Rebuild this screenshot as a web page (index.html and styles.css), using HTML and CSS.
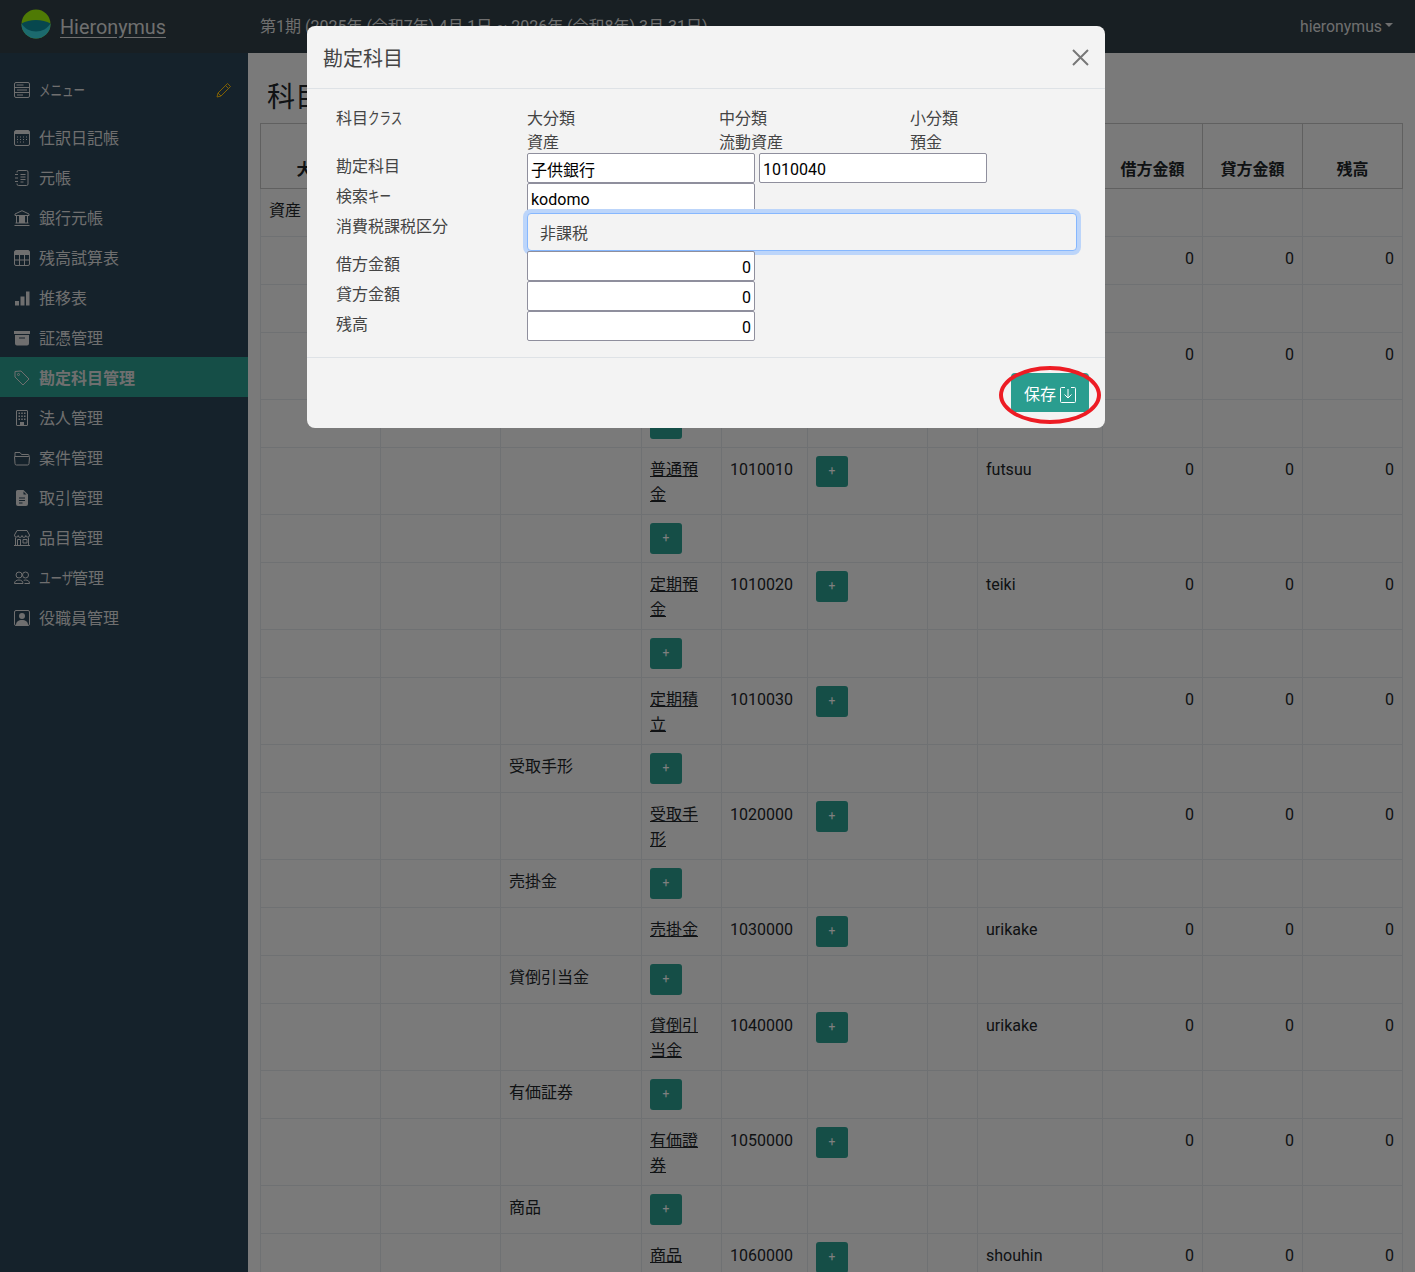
FILE: index.html
```html
<!DOCTYPE html>
<html lang="ja">
<head>
    <meta charset="UTF-8">
    <meta name="viewport" content="width=device-width, initial-scale=1.0">
    <title>Hieronymus</title>
    <link rel="stylesheet" href="styles.css">
</head>
<body>
    <header class="topbar">
        <a class="brand" href="#">
            <svg class="logo" viewBox="0 0 30 30">
                <circle cx="15" cy="15" r="14.5" fill="#9ef40a"/>
                <path d="M.5 15a14.5 14.5 0 0 0 29 0z" fill="#38d4dc"/>
                <path d="M.5 14.500c4-2 9-3.500 14.500-3.500s10.500 1.500 14.500 3.500c-3 5-8.500 8-14.500 8S3.500 19.500.5 14.500z" fill="#0f8f9c"/>
            </svg>
            <span>Hieronymus</span>
        </a>
        <span class="period">第1期 (2025年 (令和7年) 4月 1日 ~ 2026年 (令和8年) 3月 31日)</span>
        <span class="user">hieronymus<i class="caret"></i></span>
    </header>

    <div class="layout">
        <nav class="sidebar">
            <div class="menu-head">
                <svg class="icon" viewBox="0 0 16 16"><rect x=".5" y=".5" width="15" height="15" rx="1.500"/><path d="M.5 5.500h15M.5 10.500h15M2.500 3h7M3 8h10M3 13h6"/></svg>
                <span><b class="kana k4">メニュー</b></span>
                <svg class="icon pencil" viewBox="0 0 16 16"><path d="M11.500 1.500l3 3-9.500 9.500-4 1 1-4zM9.500 3.500l3 3M2 11l3 3"/></svg>
            </div>
            <a class="nav-item" href="#">
                <svg class="icon" viewBox="0 0 16 16"><rect x=".5" y=".5" width="15" height="15" rx="1.500"/><path class="solid" d="M1 1h14v3H1z"/><path d="M3 7h1m2 0h1m2 0h1m2 0h1M3 9.500h1m2 0h1m2 0h1m2 0h1M3 12h1m2 0h1m2 0h1"/></svg>
                <span>仕訳日記帳</span>
            </a>
            <a class="nav-item" href="#">
                <svg class="icon" viewBox="0 0 16 16"><path d="M3 2.500V2A1.500 1.500 0 0 1 4.500.5h8A1.500 1.500 0 0 1 14 2v12a1.500 1.500 0 0 1-1.500 1.500h-8A1.500 1.500 0 0 1 3 14v-.5M1 4.500h3M1 8h3M1 11.500h3M6.500 4.500h5M6.500 7h5M6.500 9.500h5M6.500 12h3"/></svg>
                <span>元帳</span>
            </a>
            <a class="nav-item" href="#">
                <svg class="icon" viewBox="0 0 16 16"><path d="M8 .7L1 4v1.500h14V4zM2.500 13V5.500M5.500 13V5.500M10.500 13V5.500M13.500 13V5.500M1.500 13h13M.5 15.500h15"/><path class="solid" d="M6 6h4v7H6z"/></svg>
                <span>銀行元帳</span>
            </a>
            <a class="nav-item" href="#">
                <svg class="icon" viewBox="0 0 16 16"><rect x=".5" y=".5" width="15" height="15" rx="1.500"/><path class="solid" d="M1 1h14v4H1z"/><path d="M.5 10h15M5.500 5v10.500M10.500 5v10.500"/></svg>
                <span>残高試算表</span>
            </a>
            <a class="nav-item" href="#">
                <svg class="icon" viewBox="0 0 16 16"><path class="solid" d="M1 11h4v4.500H1zM6.500 6.500h4v9h-4zM12 1.500h3.500v14H12z"/></svg>
                <span>推移表</span>
            </a>
            <a class="nav-item" href="#">
                <svg class="icon" viewBox="0 0 16 16"><path class="solid" d="M0 1h16v3H0zM1 5h14v8.500a2 2 0 0 1-2 2H3a2 2 0 0 1-2-2zm4 2.500v1h6v-1z"/></svg>
                <span>証憑管理</span>
            </a>
            <a class="nav-item active" href="#">
                <svg class="icon" viewBox="0 0 16 16"><path d="M1 1.500l6-.5 8 8-6 6-8-8z"/><circle cx="4.500" cy="4.500" r="1"/></svg>
                <span>勘定科目管理</span>
            </a>
            <a class="nav-item" href="#">
                <svg class="icon" viewBox="0 0 16 16"><rect x="2.500" y=".5" width="11" height="15" rx=".5"/><path class="solid" d="M4.500 2.500h1.500V4H4.500zM7.250 2.500h1.500V4h-1.500zM10 2.500h1.500V4H10zM4.500 5.500h1.500V7H4.500zM7.250 5.500h1.500V7h-1.500zM10 5.500h1.500V7H10zM4.500 8.500h1.500V10H4.500zM7.250 8.500h1.500V10h-1.500zM10 8.500h1.500V10H10zM6 12h4v3.500H6z"/></svg>
                <span>法人管理</span>
            </a>
            <a class="nav-item" href="#">
                <svg class="icon" viewBox="0 0 16 16"><path d="M1 6V2.500h5l1.500 2h6.500a1 1 0 0 1 1 1V7M.5 6.500h14a1 1 0 0 1 1 1l-.5 6a1.500 1.500 0 0 1-1.500 1.500h-11A1.500 1.500 0 0 1 1 13.500z"/></svg>
                <span>案件管理</span>
            </a>
            <a class="nav-item" href="#">
                <svg class="icon" viewBox="0 0 16 16"><path class="solid" d="M3.500 0H9.500l4.500 4.500V14a2 2 0 0 1-2 2H4a2 2 0 0 1-2-2V1.500A1.500 1.500 0 0 1 3.500 0zM5 7.500v1h6v-1zm0 2.500v1h6v-1zm0 2.500v1h3.500v-1zM9.500 1.500V4.500h3z"/></svg>
                <span>取引管理</span>
            </a>
            <a class="nav-item" href="#">
                <svg class="icon" viewBox="0 0 16 16"><path d="M3 .5h10l2.500 4.500a1.800 1.800 0 0 1-3.700.5 1.900 1.900 0 0 1-3.800 0 1.900 1.900 0 0 1-3.800 0A1.800 1.800 0 0 1 .5 5zM1.500 7.500v7.500M14.500 7.500v7.500M0 15.500h16M3.500 15V9.500h3V15M9 9.500h4v3.500H9z"/></svg>
                <span>品目管理</span>
            </a>
            <a class="nav-item" href="#">
                <svg class="icon" viewBox="0 0 16 16"><circle cx="5" cy="5" r="3"/><circle cx="11.500" cy="5" r="3"/><path d="M.5 13.500c0-2.500 2-3.500 4.500-3.500s4 1.500 4 3.500zM10.500 13.500h5c0-2.500-1.800-3.500-4-3.500-.7 0-1.300.1-1.800.3"/></svg>
                <span><b class="kana k3">ユーザ</b>管理</span>
            </a>
            <a class="nav-item" href="#">
                <svg class="icon" viewBox="0 0 16 16"><rect x=".5" y=".5" width="15" height="15" rx="1.500"/><circle class="solid" cx="8" cy="6" r="3"/><path class="solid" d="M2 15c0-3.500 2.500-5 6-5s6 1.500 6 5z"/></svg>
                <span>役職員管理</span>
            </a>
        </nav>

        <main class="content">
            <h1 class="page-title">科目一覧</h1>
            <table class="accounts">
                <colgroup>
                    <col class="c1"><col class="c2"><col class="c3"><col class="c4"><col class="c5"><col class="c6">
                    <col class="c7"><col class="c8"><col class="c9"><col class="c9"><col class="c9">
                </colgroup>
                <thead>
                    <tr><th>大分類</th><th></th><th></th><th></th><th></th><th></th><th></th><th></th><th>借方金額</th><th>貸方金額</th><th>残高</th></tr>
                </thead>
                <tbody>
                    <tr><td>資産</td><td></td><td></td><td></td><td></td><td></td><td></td><td></td><td></td><td></td><td></td></tr>
                    <tr><td></td><td></td><td></td><td></td><td></td><td></td><td></td><td></td><td class="num">0</td><td class="num">0</td><td class="num">0</td></tr>
                    <tr><td></td><td></td><td></td><td></td><td></td><td></td><td></td><td></td><td></td><td></td><td></td></tr>
                    <tr class="tall"><td></td><td></td><td></td><td></td><td></td><td></td><td></td><td></td><td class="num">0</td><td class="num">0</td><td class="num">0</td></tr>
                    <tr><td></td><td></td><td></td><td><button class="add">+</button></td><td></td><td></td><td></td><td></td><td></td><td></td><td></td></tr>
                    <tr><td></td><td></td><td></td><td><a href="#">普通預金</a></td><td>1010010</td><td><button class="add">+</button></td><td></td><td>futsuu</td><td class="num">0</td><td class="num">0</td><td class="num">0</td></tr>
                    <tr><td></td><td></td><td></td><td><button class="add">+</button></td><td></td><td></td><td></td><td></td><td></td><td></td><td></td></tr>
                    <tr><td></td><td></td><td></td><td><a href="#">定期預金</a></td><td>1010020</td><td><button class="add">+</button></td><td></td><td>teiki</td><td class="num">0</td><td class="num">0</td><td class="num">0</td></tr>
                    <tr><td></td><td></td><td></td><td><button class="add">+</button></td><td></td><td></td><td></td><td></td><td></td><td></td><td></td></tr>
                    <tr><td></td><td></td><td></td><td><a href="#">定期積立</a></td><td>1010030</td><td><button class="add">+</button></td><td></td><td></td><td class="num">0</td><td class="num">0</td><td class="num">0</td></tr>
                    <tr><td></td><td></td><td>受取手形</td><td><button class="add">+</button></td><td></td><td></td><td></td><td></td><td></td><td></td><td></td></tr>
                    <tr><td></td><td></td><td></td><td><a href="#">受取手形</a></td><td>1020000</td><td><button class="add">+</button></td><td></td><td></td><td class="num">0</td><td class="num">0</td><td class="num">0</td></tr>
                    <tr><td></td><td></td><td>売掛金</td><td><button class="add">+</button></td><td></td><td></td><td></td><td></td><td></td><td></td><td></td></tr>
                    <tr><td></td><td></td><td></td><td><a href="#">売掛金</a></td><td>1030000</td><td><button class="add">+</button></td><td></td><td>urikake</td><td class="num">0</td><td class="num">0</td><td class="num">0</td></tr>
                    <tr><td></td><td></td><td>貸倒引当金</td><td><button class="add">+</button></td><td></td><td></td><td></td><td></td><td></td><td></td><td></td></tr>
                    <tr><td></td><td></td><td></td><td><a href="#">貸倒引当金</a></td><td>1040000</td><td><button class="add">+</button></td><td></td><td>urikake</td><td class="num">0</td><td class="num">0</td><td class="num">0</td></tr>
                    <tr><td></td><td></td><td>有価証券</td><td><button class="add">+</button></td><td></td><td></td><td></td><td></td><td></td><td></td><td></td></tr>
                    <tr><td></td><td></td><td></td><td><a href="#">有価證券</a></td><td>1050000</td><td><button class="add">+</button></td><td></td><td></td><td class="num">0</td><td class="num">0</td><td class="num">0</td></tr>
                    <tr><td></td><td></td><td>商品</td><td><button class="add">+</button></td><td></td><td></td><td></td><td></td><td></td><td></td><td></td></tr>
                    <tr><td></td><td></td><td></td><td><a href="#">商品</a></td><td>1060000</td><td><button class="add">+</button></td><td></td><td>shouhin</td><td class="num">0</td><td class="num">0</td><td class="num">0</td></tr>
                </tbody>
            </table>
        </main>
    </div>

    <div class="backdrop"></div>

    <div class="modal">
        <div class="modal-head">
            <h2>勘定科目</h2>
            <svg class="close" viewBox="0 0 17 17"><path d="M1 1l15 15M16 1L1 16"/></svg>
        </div>
        <form class="modal-body">
            <span>科目<b class="kana k3">クラス</b></span><span>大分類</span><span>中分類</span><span>小分類</span>
            <span></span><span class="sub">資産</span><span class="sub">流動資産</span><span class="sub">預金</span>

            <label>勘定科目</label>
            <div class="field wide">
                <input type="text" value="子供銀行">
                <input type="text" value="1010040">
            </div>
            <label>検索<b class="kana k2">キー</b></label>
            <div class="field wide"><input type="text" value="kodomo"></div>
            <label>消費税課税区分</label>
            <div class="field wide"><select class="tax"><option>非課税</option></select></div>
            <label>借方金額</label>
            <div class="field wide"><input class="amount" type="text" value="0"></div>
            <label>貸方金額</label>
            <div class="field wide"><input class="amount" type="text" value="0"></div>
            <label>残高</label>
            <div class="field wide"><input class="amount" type="text" value="0"></div>
        </form>
        <div class="modal-foot">
            <button class="save">保存
                <svg viewBox="0 0 16 16"><path d="M5 .5H1.500a1 1 0 0 0-1 1v13a1 1 0 0 0 1 1h13a1 1 0 0 0 1-1v-13a1 1 0 0 0-1-1H11M8 2v9M4.500 7.500L8 11l3.500-3.500"/></svg>
            </button>
            <div class="callout"></div>
        </div>
    </div>
</body>
</html>
```

FILE: styles.css
```css
* {
    box-sizing: border-box;
}
html, body {
    margin: 0;
    height: 100%;
    overflow: hidden;
}
body {
    font: 16px/25px Roboto, "Noto Sans CJK JP", sans-serif;
    color: #212529;
    background-color: #f5f5f5;
}

/* katakana in the original UI font is much narrower */
.kana {
    display: inline-block;
    font-weight: inherit;
    white-space: nowrap;
    transform: scaleX(.72);
    transform-origin: 0 50%;
}
.k2 { width: 22px; }
.k3 { width: 33px; }
.k4 { width: 44px; }

/* top bar */
.topbar {
    height: 53px;
    display: flex;
    align-items: center;
    padding-right: 22px;
    background-color: #303e46;
    color: #dedede;
}
.brand {
    width: 260px;
    display: flex;
    align-items: center;
    gap: 9px;
    padding-left: 21px;
    font-size: 19.8px;
    color: #dedede;
    text-underline-offset: 3px;
}
.brand span {
    padding-top: 2px;
}
.logo {
    width: 30px;
    height: 30px;
    flex: none;
    margin-bottom: 6px;
}
.period {
    flex: 1;
}
.user {
    display: flex;
    align-items: center;
    font-size: 15.8px;
}
.caret {
    margin: 0 0 4px 3px;
    border-top: 4px solid #dedede;
    border-left: 4px solid transparent;
    border-right: 4px solid transparent;
}

/* sidebar */
.layout {
    display: flex;
    height: calc(100% - 53px);
}
.sidebar {
    width: 248px;
    flex: none;
    padding-top: 16px;
    background-color: #2a4456;
    color: #dedede;
}
.menu-head {
    display: flex;
    align-items: center;
    gap: 9px;
    height: 40px;
    margin-bottom: 8px;
    padding: 2px 16px 0 14px;
}
.menu-head span {
    flex: 1;
}
.nav-item {
    display: flex;
    align-items: center;
    gap: 9px;
    height: 40px;
    padding: 2px 0 0 14px;
    color: #dedede;
    text-decoration: none;
}
.nav-item.active {
    background-color: #2a9d8f;
    font-weight: 700;
}
.icon {
    width: 16px;
    height: 16px;
    flex: none;
    fill: none;
    stroke: currentColor;
    stroke-width: 1;
}
.icon .solid {
    fill: currentColor;
    stroke: none;
}
.pencil {
    color: #ffc107;
}

/* table */
.content {
    flex: 1;
    min-width: 0;
    padding: 0 12px;
}
.page-title {
    height: 70px;
    margin: 0;
    padding: 24px 0 0 7px;
    font-size: 28px;
    line-height: 42px;
    font-weight: 400;
}
.accounts {
    width: 1142px;
    table-layout: fixed;
    border-collapse: collapse;
}
.c1 { width: 120px; }
.c2 { width: 120px; }
.c3 { width: 141px; }
.c4 { width: 80px; }
.c5 { width: 86px; }
.c6 { width: 120px; }
.c7 { width: 50px; }
.c8 { width: 125px; }
.c9 { width: 100px; }
.accounts th {
    height: 65px;
    padding: 8px 8px 6px;
    vertical-align: bottom;
    text-align: center;
    border: 1px solid #c0c0c0;
}
.accounts tbody tr {
    height: 48px;
}
.accounts tbody tr.tall {
    height: 67px;
}
.accounts td {
    padding: 9px 8px 7px;
    vertical-align: top;
    border: 1px solid #dee2e6;
}
.accounts td.num {
    text-align: right;
}
.accounts a {
    color: #212529;
}
.add {
    display: block;
    width: 32px;
    height: 31px;
    margin-top: -1px;
    padding: 0;
    border: 0;
    border-radius: 3px;
    background-color: #2a9d8f;
    color: #fff;
    font: 12px/31px Roboto, sans-serif;
}

/* modal */
.backdrop {
    position: fixed;
    inset: 0;
    background-color: rgba(0, 0, 0, .5);
}
.modal {
    position: fixed;
    top: 26px;
    left: 307px;
    width: 798px;
    height: 402px;
    border-radius: 8px;
    background-color: #f3f3f3;
    color: #444;
}
.modal-head {
    height: 63px;
    display: flex;
    align-items: center;
    justify-content: space-between;
    padding: 5px 16px 0;
    border-bottom: 1px solid #dee2e6;
}
.modal-head h2 {
    margin: 0;
    font-size: 20px;
    font-weight: 400;
}
.close {
    width: 17px;
    height: 17px;
    margin-top: -5px;
    fill: none;
    stroke: #777;
    stroke-width: 2;
}
.modal-body {
    height: 269px;
    display: grid;
    grid-template-columns: 191px 192px 191px 1fr;
    grid-template-rows: 25px 23px 30px 30px 38px 30px 30px 30px;
    padding: 16px 16px 16px 29px;
    line-height: 27px;
    border-bottom: 1px solid #dee2e6;
}
.sub {
    line-height: 25px;
}
.wide {
    grid-column: 2 / 5;
}
.field {
    display: flex;
    gap: 4px;
}
.field input {
    width: 228px;
    height: 30px;
    padding: 3px 3px 1px;
    border: 1px solid #8f8f9d;
    border-radius: 2px;
    background-color: #fff;
    color: #000;
    font: 16px/25px Roboto, "Noto Sans CJK JP", sans-serif;
}
.field input.amount {
    text-align: right;
}
.tax {
    width: 550px;
    height: 38px;
    padding: 2px 12px 0;
    appearance: none;
    border: 1px solid #86b7fe;
    border-radius: 4px;
    background-color: #f3f3f3;
    color: #444;
    font: 16px/25px Roboto, "Noto Sans CJK JP", sans-serif;
    box-shadow: 0 0 0 4px #bcd5fa;
}
.modal-foot {
    position: relative;
    height: 70px;
    display: flex;
    justify-content: flex-end;
    padding: 15px 16px 16px;
}
.save {
    width: 78px;
    height: 39px;
    display: flex;
    align-items: center;
    justify-content: center;
    gap: 4px;
    padding: 4px 0 0;
    border: 0;
    border-radius: 4px;
    background-color: #2a9d8f;
    color: #fff;
    font: inherit;
}
.save svg {
    width: 16px;
    height: 16px;
    fill: none;
    stroke: #fff;
    stroke-width: 1;
}
.callout {
    position: absolute;
    right: 4px;
    bottom: 4px;
    width: 102px;
    height: 58px;
    border: 4px solid #ed1c24;
    border-radius: 50%;
}
```
